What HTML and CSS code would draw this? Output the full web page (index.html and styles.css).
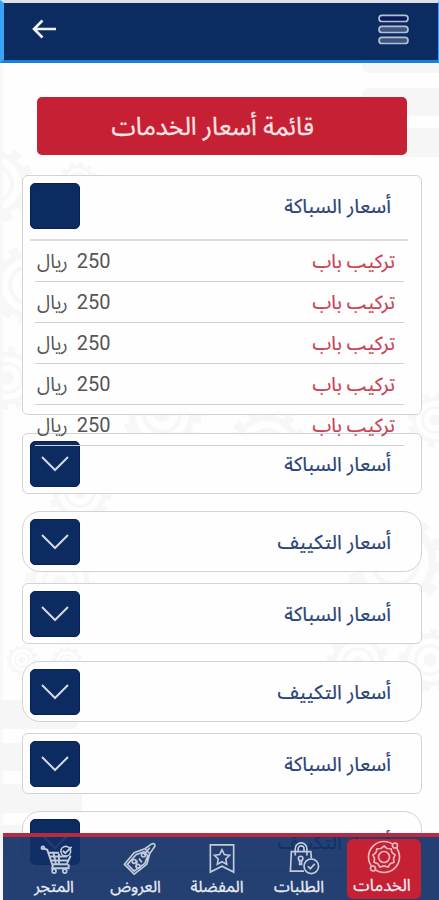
FILE: index.html
```
<!DOCTYPE html>
<html lang="ar" dir="rtl">
<head>
<meta charset="utf-8">
<title>قائمة أسعار الخدمات</title>
<link rel="stylesheet" href="styles.css">
</head>
<body>
<svg class="backdrop" viewBox="0 0 439 900" aria-hidden="true">
  <defs>
    <g id="gear" fill="none" stroke="#f7f7f8">
      <circle r="36" stroke-width="7" stroke-dasharray="9.4 9.4"/>
      <circle r="30" stroke-width="6"/>
      <circle r="18" stroke-width="4"/>
      <circle r="8" fill="#f7f7f8" stroke="none"/>
    </g>
  </defs>
  <path d="M0 62h3v838h-3z" fill="#f8f8f8"/>
  <g fill="#f6f6f6">
    <rect x="362" y="50" width="100" height="23" rx="7"/>
    <rect x="362" y="88" width="100" height="28" rx="7"/>
    <rect x="370" y="128" width="100" height="29" rx="7"/>
    <rect x="-10" y="700" width="88" height="29" rx="6"/>
    <rect x="-10" y="743" width="80" height="28" rx="6"/>
    <rect x="-10" y="784" width="92" height="29" rx="6"/>
    <rect x="-10" y="825" width="80" height="30" rx="6"/>
  </g>
  <use href="#gear" x="-6" y="184"/>
  <use href="#gear" transform="translate(78 182) scale(.5)"/>
  <use href="#gear" x="28" y="285"/>
  <use href="#gear" transform="translate(8 378) scale(.8)"/>
  <use href="#gear" x="162" y="414"/>
  <use href="#gear" x="267" y="448"/>
  <use href="#gear" transform="translate(435 420) scale(.7)"/>
  <use href="#gear" transform="translate(80 492) scale(.8)"/>
  <use href="#gear" transform="translate(395 562) scale(1.25)"/>
  <use href="#gear" transform="translate(358 663) scale(.8)"/>
  <use href="#gear" transform="translate(430 660) scale(.8)"/>
  <use href="#gear" transform="translate(22 660) scale(.4)"/>
  <use href="#gear" transform="translate(67 662) scale(.4)"/>
  <use href="#gear" transform="translate(60 582) scale(.9)"/>
</svg>

<header class="topbar">
  <svg class="menu" viewBox="0 0 31 32"><g fill="#3d557f" stroke="#b4bfd3" stroke-width="1.7"><rect class="hollow" x="1" y="1.3" width="29" height="6.200" rx="3.1"/><rect x="1" y="12.3" width="29" height="6.200" rx="3.1"/><rect x="1" y="23.3" width="29" height="6.200" rx="3.1"/></g></svg>
  <svg class="back" viewBox="0 0 26 20"><path d="M11.500 1.500L3 10l8.500 8.500M3 10h22" fill="none" stroke="#f2f3f8" stroke-width="2.600"/></svg>
</header>

<main class="content">
  <h1 class="banner"><span>قائمة أسعار الخدمات</span></h1>

  <section class="card open">
    <div class="head"><span class="name">أسعار السباكة</span><span class="toggle"></span></div>
    <ul class="prices">
      <li><span class="item">تركيب باب</span><span class="cost"><b>250</b><i>ريال</i></span></li>
      <li><span class="item">تركيب باب</span><span class="cost"><b>250</b><i>ريال</i></span></li>
      <li><span class="item">تركيب باب</span><span class="cost"><b>250</b><i>ريال</i></span></li>
      <li><span class="item">تركيب باب</span><span class="cost"><b>250</b><i>ريال</i></span></li>
      <li><span class="item">تركيب باب</span><span class="cost"><b>250</b><i>ريال</i></span></li>
    </ul>
  </section>

  <section class="card"><div class="head"><span class="name">أسعار السباكة</span><span class="toggle"><svg viewBox="0 0 28 16"><path d="M1 1l13 13L27 1"/></svg></span></div></section>
  <section class="card round"><div class="head"><span class="name">أسعار التكييف</span><span class="toggle"><svg viewBox="0 0 28 16"><path d="M1 1l13 13L27 1"/></svg></span></div></section>
  <section class="card"><div class="head"><span class="name">أسعار السباكة</span><span class="toggle"><svg viewBox="0 0 28 16"><path d="M1 1l13 13L27 1"/></svg></span></div></section>
  <section class="card round"><div class="head"><span class="name">أسعار التكييف</span><span class="toggle"><svg viewBox="0 0 28 16"><path d="M1 1l13 13L27 1"/></svg></span></div></section>
  <section class="card"><div class="head"><span class="name">أسعار السباكة</span><span class="toggle"><svg viewBox="0 0 28 16"><path d="M1 1l13 13L27 1"/></svg></span></div></section>
  <section class="card round"><div class="head"><span class="name">أسعار التكييف</span><span class="toggle"><svg viewBox="0 0 28 16"><path d="M1 1l13 13L27 1"/></svg></span></div></section>
</main>

<nav class="tabs">
  <a class="tab active">
    <svg viewBox="0 0 36 36"><circle cx="18" cy="18" r="15.500"/><path d="M18 7l3 2.500 4 .2 1 3.800 3 2.500-1.500 3.500.5 3.800-3.700 1.300-2.300 3.400-4-1-4 1-2.300-3.400L8 23.300l.5-3.800L7 16l3-2.500 1-3.800 4-.2z"/><circle cx="18" cy="18" r="5.500"/><circle class="dot" cx="29" cy="6.500" r="2.500"/><circle class="dot" cx="7" cy="29.500" r="2.500"/></svg>
    <span>الخدمات</span>
  </a>
  <a class="tab orders">
    <svg viewBox="0 0 36 36"><path d="M18 31H4L5 11h20l.6 7M9 15V8a6 6 0 0 1 12 0v7M12 11V8a3 3 0 0 1 6 0v3"/><circle cx="14.500" cy="18" r="2.300"/><path d="M13.500 20v4h2v-4"/><circle cx="25.500" cy="26" r="7.500"/><path d="M22 26l2.500 2.500 4.500-5"/></svg>
    <span>الطلبات</span>
  </a>
  <a class="tab saved">
    <svg viewBox="0 0 36 36"><path d="M6 4h24v28l-12-6-12 6zM18 9l2.400 4.900 5.400.8-3.900 3.800.9 5.400-4.800-2.600-4.800 2.600.9-5.400-3.900-3.800 5.400-.8z"/></svg>
    <span>المفضلة</span>
  </a>
  <a class="tab offers">
    <svg viewBox="0 0 36 36"><path d="M2 24L12 12l11-4 5 5-3 11-13 10zM5 24l9-10 8-3 4 4-3 8-11 8zM23 8l7-5c3-1 4 1 3 3l-5 7M22 14l6-7"/><circle cx="21.500" cy="14.500" r="2"/><circle cx="12" cy="21" r="2"/><circle cx="16" cy="26" r="2"/><path d="M15 20l-1 7M17 18l3 4"/></svg>
    <span>العروض</span>
  </a>
  <a class="tab shop">
    <svg viewBox="0 0 36 36"><path d="M3 7l5 2 5 15h16M9 12h11M10.500 16h18M12 20h17M14 11l3 13M20 13v11M32 15l-4 9M14 24l-1 4h17v-4" stroke-width="2"/><circle cx="27" cy="10.500" r="5"/><path d="M24 10l2.500 2.500L33 6" stroke-width="2"/><circle cx="3.500" cy="7" r="1.500"/><circle cx="15" cy="31" r="2"/><circle cx="26" cy="31" r="2"/></svg>
    <span>المتجر</span>
  </a>
</nav>
</body>
</html>
```
FILE: styles.css
```
* { box-sizing: border-box; }

body {
  margin: 0;
  width: 439px;
  height: 900px;
  overflow: hidden;
  position: relative;
  background: #fefefe;
  font-family: "Noto Sans", "Noto Sans Arabic", "DejaVu Sans", sans-serif;
}

.backdrop { position: absolute; inset: 0; width: 439px; height: 900px; }

.topbar {
  position: relative;
  display: flex;
  justify-content: space-between;
  height: 63px;
  padding: 11px 29px 0 27px;
  background: #0c2b60;
  border-top: 3px solid #dfe0e5;
  border-left: 4px solid #38a3f6;
  border-bottom: 3px solid #1680df;
  border-right: 1px solid #38a3f6;
}
.menu { width: 31px; height: 32px; }
.menu .hollow { fill: #0a1b5a; }
.back { width: 26px; height: 20px; margin-top: 5px; }

.content { position: relative; padding: 34px 17px 0 22px; }

.banner {
  display: flex;
  align-items: center;
  width: 370px;
  height: 58px;
  margin: 0 15px 20px 15px;
  padding-right: 93px;
  border-radius: 5px;
  background: #c52033;
  color: #fde3e5;
  font-size: 24.5px;
  font-weight: 400;
  line-height: 58px;
  white-space: nowrap;
  -webkit-text-stroke: .3px;
}

.card {
  width: 400px;
  height: 61px;
  margin-bottom: 11px;
  border: 1.5px solid #d3d3d4;
  border-radius: 6px;
  background: #fefefe;
}
.card.round { border-radius: 18px; margin-bottom: 11px; }
.card + .round { margin-top: 17px; }
.card.open { height: 240px; margin-bottom: 18px; }

.head {
  display: flex;
  justify-content: space-between;
  align-items: center;
  height: 60px;
  padding: 0 30px 0 7px;
}
.name { color: #28437a; font-size: 20px; line-height: 30px; white-space: nowrap; -webkit-text-stroke: .2px; }

.toggle {
  display: flex;
  align-items: center;
  justify-content: center;
  width: 50px;
  height: 46px;
  border-radius: 5px;
  background: #0c2b60;
  border: 1px solid #08205a;
}
.toggle svg { width: 28px; height: 16px; margin-top: -1px; }
.toggle path { fill: none; stroke: #d3d8e6; stroke-width: 2; }

.prices {
  position: relative;
  z-index: 1;
  list-style: none;
  margin: 3px 13px 0 7px;
  padding: 0;
  border-top: 2px solid #dedede;
}
.prices li {
  display: flex;
  justify-content: space-between;
  align-items: center;
  height: 41px;
  margin: 0 4px 0 5px;
  padding: 0 9px 0 2px;
  border-bottom: 1.5px solid #cfcfd0;
}
.item { color: #cb3e51; font-size: 19px; line-height: 30px; white-space: nowrap; -webkit-text-stroke: .2px; }
.cost { display: flex; gap: 9px; color: #555; font-size: 19px; line-height: 30px; }
.cost b, .cost i { font-weight: 400; font-style: normal; }
.cost b { font-family: Roboto, sans-serif; font-size: 20px; }

.tabs {
  position: absolute;
  left: 3px;
  right: 0;
  top: 833px;
  z-index: 3;
  display: grid;
  grid-template-columns: 74px 96px 68px 95px 68px;
  height: 67px;
  padding-right: 18px;
  border-top: 4px solid #b82a42;
  background: rgba(17, 48, 103, .92);
}
.tab {
  display: flex;
  flex-direction: column;
  align-items: center;
  height: 60px;
  margin-top: 2px;
  color: #e7ebf3;
  font-size: 16px;
  line-height: 20px;
  white-space: nowrap;
  -webkit-text-stroke: .3px;
}
.tab svg { width: 36px; height: 36px; fill: none; stroke: #c2cbda; stroke-width: 1.700; }
.tab:not(.active) { padding-top: 2px; }
.tab:not(.active) svg { height: 35px; }
.tab.orders svg { transform: translateX(5px); }
.tab.saved svg { transform: translateX(5px); }
.tab.offers svg { transform: translateX(4px); }
.tab.shop svg { transform: translateX(3px); }
.tab.active { border-radius: 6px; background: #c52033; font-size: 16.5px; }
.tab.active span { transform: translateX(-2px); }
.tab.active svg { stroke: #edb7be; }
.tab .dot { fill: #c52033; }
```
